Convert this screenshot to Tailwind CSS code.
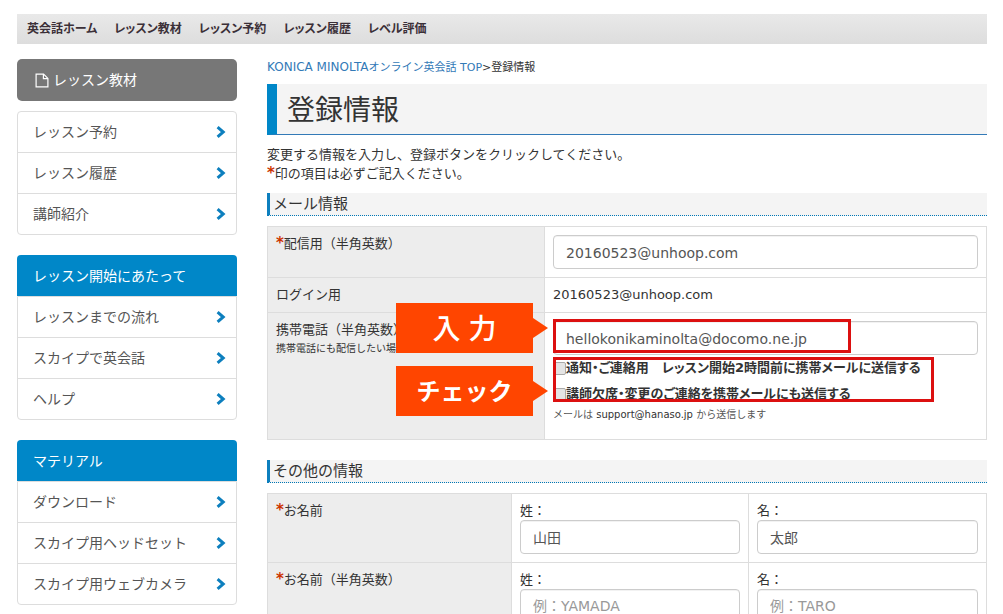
<!DOCTYPE html>
<html lang="ja">
<head>
<meta charset="utf-8">
<meta name="viewport" content="width=device-width, initial-scale=1">
<title>登録情報</title>
<script src="https://cdn.jsdelivr.net/npm/@tailwindcss/browser@4"></script>
</head>
<body class="bg-white px-4 pt-3.5 pb-5 font-['DejaVu_Sans','Noto_Sans_CJK_JP',sans-serif] text-[13px] leading-[18px] text-[#333]">
<svg class="hidden" aria-hidden="true">
  <symbol id="chevron" viewBox="0 0 10 12"><path d="M1.6 1.2 L7.2 6 L1.6 10.8" fill="none" stroke="currentColor" stroke-width="3"/></symbol>
</svg>

<nav class="ml-px flex h-[30px] items-center gap-[17px] bg-linear-to-b from-[#e9e9e9] to-[#dddddd] px-2.5 text-xs font-bold text-[#3b3038] [font-feature-settings:'palt']">
  <a href="#">英会話ホーム</a>
  <a href="#">レッスン教材</a>
  <a href="#">レッスン予約</a>
  <a href="#">レッスン履歴</a>
  <a href="#">レベル評価</a>
</nav>

<div class="ml-px flex gap-[30px] pt-[15px]">
  <aside class="w-[220px] shrink-0 text-sm leading-5 text-[#555]">
    <a href="#" class="flex h-[42px] items-center gap-1 rounded-[5px] bg-[#777] px-[18px] text-white">
      <svg class="h-[15px] w-3.5" viewBox="0 0 14 15" fill="none" stroke="currentColor" stroke-width="1.2"><path d="M1.1 1.1H8.6L12.9 5.4V13.9H1.1Z"/><path d="M8.4 1.1V5.6H12.9"/></svg>
      レッスン教材
    </a>
    <ul class="mt-2.5 divide-y divide-[#ddd] rounded border border-[#ddd]">
      <li><a href="#" class="flex h-10 items-center justify-between pr-2.5 pl-[15px]">レッスン予約<svg class="h-3 w-2.5 text-[#0d7fbe]"><use href="#chevron"/></svg></a></li>
      <li><a href="#" class="flex h-10 items-center justify-between pr-2.5 pl-[15px]">レッスン履歴<svg class="h-3 w-2.5 text-[#0d7fbe]"><use href="#chevron"/></svg></a></li>
      <li><a href="#" class="flex h-10 items-center justify-between pr-2.5 pl-[15px]">講師紹介<svg class="h-3 w-2.5 text-[#0d7fbe]"><use href="#chevron"/></svg></a></li>
    </ul>

    <h2 class="mt-5 flex h-[41px] items-center rounded-t bg-[#0087c8] px-4 text-white">レッスン開始にあたって</h2>
    <ul class="divide-y divide-[#ddd] rounded-b border border-[#ddd]">
      <li><a href="#" class="flex h-10 items-center justify-between pr-2.5 pl-[15px]">レッスンまでの流れ<svg class="h-3 w-2.5 text-[#0d7fbe]"><use href="#chevron"/></svg></a></li>
      <li><a href="#" class="flex h-10 items-center justify-between pr-2.5 pl-[15px]">スカイプで英会話<svg class="h-3 w-2.5 text-[#0d7fbe]"><use href="#chevron"/></svg></a></li>
      <li><a href="#" class="flex h-10 items-center justify-between pr-2.5 pl-[15px]">ヘルプ<svg class="h-3 w-2.5 text-[#0d7fbe]"><use href="#chevron"/></svg></a></li>
    </ul>

    <h2 class="mt-5 flex h-[41px] items-center rounded-t bg-[#0087c8] px-4 text-white">マテリアル</h2>
    <ul class="divide-y divide-[#ddd] rounded-b border border-[#ddd]">
      <li><a href="#" class="flex h-10 items-center justify-between pr-2.5 pl-[15px]">ダウンロード<svg class="h-3 w-2.5 text-[#0d7fbe]"><use href="#chevron"/></svg></a></li>
      <li><a href="#" class="flex h-10 items-center justify-between pr-2.5 pl-[15px]">スカイプ用ヘッドセット<svg class="h-3 w-2.5 text-[#0d7fbe]"><use href="#chevron"/></svg></a></li>
      <li><a href="#" class="flex h-10 items-center justify-between pr-2.5 pl-[15px]">スカイプ用ウェブカメラ<svg class="h-3 w-2.5 text-[#0d7fbe]"><use href="#chevron"/></svg></a></li>
    </ul>
  </aside>

  <main class="min-w-0 grow">
    <p class="text-[11px] leading-4"><a href="#" class="text-[#337ab7]"><span class="text-xs leading-4">KONICA MINOLTA</span>オンライン英会話 TOP</a>&gt;登録情報</p>
    <h1 class="mt-2 h-[51px] border-b border-l-10 border-b-[#337ab7] border-l-[#0087c8] bg-[#f4f4f4] pl-2.5 text-[28px] leading-[54px]">登録情報</h1>
    <p class="mt-2.5 leading-[19px]">変更する情報を入力し、登録ボタンをクリックしてください。<br><b class="text-[15px] leading-none text-[#cc3300]">*</b>印の項目は必ずご記入ください。</p>

    <h2 class="mt-2.5 h-[23px] bg-[#f4f4f4] pl-[3px] text-[15px] leading-[23px] [border-bottom:1px_dotted_#0077b5] [border-left:3px_solid_#0d7fbe]">メール情報</h2>
    <table class="mt-2.5 w-full table-fixed border-collapse">
      <tr>
        <th scope="row" class="w-[277px] border border-[#ddd] bg-[#ededed] p-2 text-left align-top font-normal"><label for="mail"><b class="text-[15px] leading-none text-[#cc3300]">*</b>配信用（半角英数）</label></th>
        <td class="border border-[#ddd] p-2"><input id="mail" type="text" value="20160523@unhoop.com" class="block h-[34px] w-full rounded border border-[#ccc] px-3 pt-0.5 text-sm text-[#555] inset-shadow-2xs"></td>
      </tr>
      <tr>
        <th scope="row" class="border border-[#ddd] bg-[#ededed] p-2 text-left align-top font-normal">ログイン用</th>
        <td class="border border-[#ddd] p-2">20160523@unhoop.com</td>
      </tr>
      <tr>
        <th scope="row" class="border border-[#ddd] bg-[#ededed] p-2 text-left align-top font-normal"><label for="mobile">携帯電話（半角英数）</label><br><small class="text-[10px]">携帯電話にも配信したい場合は</small></th>
        <td class="border border-[#ddd] p-2">
          <div class="relative pb-[7px]">
            <input id="mobile" type="text" value="hellokonikaminolta@docomo.ne.jp" class="block h-[34px] w-full rounded border border-[#ccc] px-3 pt-0.5 text-sm text-[#555] inset-shadow-2xs">
            <label class="mt-1 flex items-center font-bold whitespace-nowrap [font-feature-settings:'palt']"><input type="checkbox" class="size-[13px] shrink-0 appearance-none rounded-xs border border-[#aaa] bg-[#e4e4e4]">通知・ご連絡用　レッスン開始2時間前に携帯メールに送信する</label>
            <label class="mt-2 flex items-center font-bold whitespace-nowrap [font-feature-settings:'palt']"><input type="checkbox" class="size-[13px] shrink-0 appearance-none rounded-xs border border-[#aaa] bg-[#e4e4e4]">講師欠席・変更のご連絡を携帯メールにも送信する</label>
            <p class="mt-[3px] text-[10px]"><span class="text-[#555]">メールは</span> support@hanaso.jp <span class="text-[#555]">から送信します</span></p>

            <!-- Highlight frames -->
            <div class="pointer-events-none absolute -top-0.5 left-0 h-[34px] w-[298px] border-3 border-[#dc1010]"></div>
            <div class="pointer-events-none absolute top-9 left-0 h-[45px] w-[381px] border-3 border-[#dc1010]"></div>
            <!-- Callouts -->
            <div class="absolute -top-[18px] right-full mr-[5px] flex items-center">
              <div class="flex h-[50px] w-[137px] items-center justify-center gap-2 bg-[#ff4500] pt-1 text-[28px] font-medium text-white"><span>入</span><span>力</span></div>
              <svg class="h-5 w-[15px] fill-[#ff4500]" viewBox="0 0 15 20"><path d="M0 0L15 10L0 20Z"/></svg>
            </div>
            <div class="absolute top-[45px] right-full mr-[5px] flex items-center">
              <div class="flex h-[50px] w-[137px] items-center justify-center bg-[#ff4500] pt-0.5 text-2xl font-bold whitespace-nowrap text-white">チェック</div>
              <svg class="h-5 w-[15px] fill-[#ff4500]" viewBox="0 0 15 20"><path d="M0 0L15 10L0 20Z"/></svg>
            </div>
          </div>
        </td>
      </tr>
    </table>

    <h2 class="mt-5 h-[23px] bg-[#f4f4f4] pl-[3px] text-[15px] leading-[23px] [border-bottom:1px_dotted_#0077b5] [border-left:3px_solid_#0d7fbe]">その他の情報</h2>
    <table class="mt-2.5 w-full table-fixed border-collapse">
      <tr>
        <th scope="row" class="w-[244px] border border-[#ddd] bg-[#ededed] p-2 text-left align-top font-normal"><b class="text-[15px] leading-none text-[#cc3300]">*</b>お名前</th>
        <td class="w-[237px] border border-[#ddd] p-2"><label for="sei" class="block">姓：</label><input id="sei" type="text" value="山田" class="block h-[34px] w-full rounded border border-[#ccc] px-3 text-sm text-[#555] inset-shadow-2xs"></td>
        <td class="border border-[#ddd] p-2"><label for="mei" class="block">名：</label><input id="mei" type="text" value="太郎" class="block h-[34px] w-full rounded border border-[#ccc] px-3 text-sm text-[#555] inset-shadow-2xs"></td>
      </tr>
      <tr>
        <th scope="row" class="border border-[#ddd] bg-[#ededed] p-2 text-left align-top font-normal"><b class="text-[15px] leading-none text-[#cc3300]">*</b>お名前（半角英数）</th>
        <td class="border border-[#ddd] p-2"><label for="sei-en" class="block">姓：</label><input id="sei-en" type="text" placeholder="例：YAMADA" class="block h-[34px] w-full rounded border border-[#ccc] px-3 text-sm text-[#555] inset-shadow-2xs placeholder:text-[#999]"></td>
        <td class="border border-[#ddd] p-2"><label for="mei-en" class="block">名：</label><input id="mei-en" type="text" placeholder="例：TARO" class="block h-[34px] w-full rounded border border-[#ccc] px-3 text-sm text-[#555] inset-shadow-2xs placeholder:text-[#999]"></td>
      </tr>
    </table>
  </main>
</div>
</body>
</html>
